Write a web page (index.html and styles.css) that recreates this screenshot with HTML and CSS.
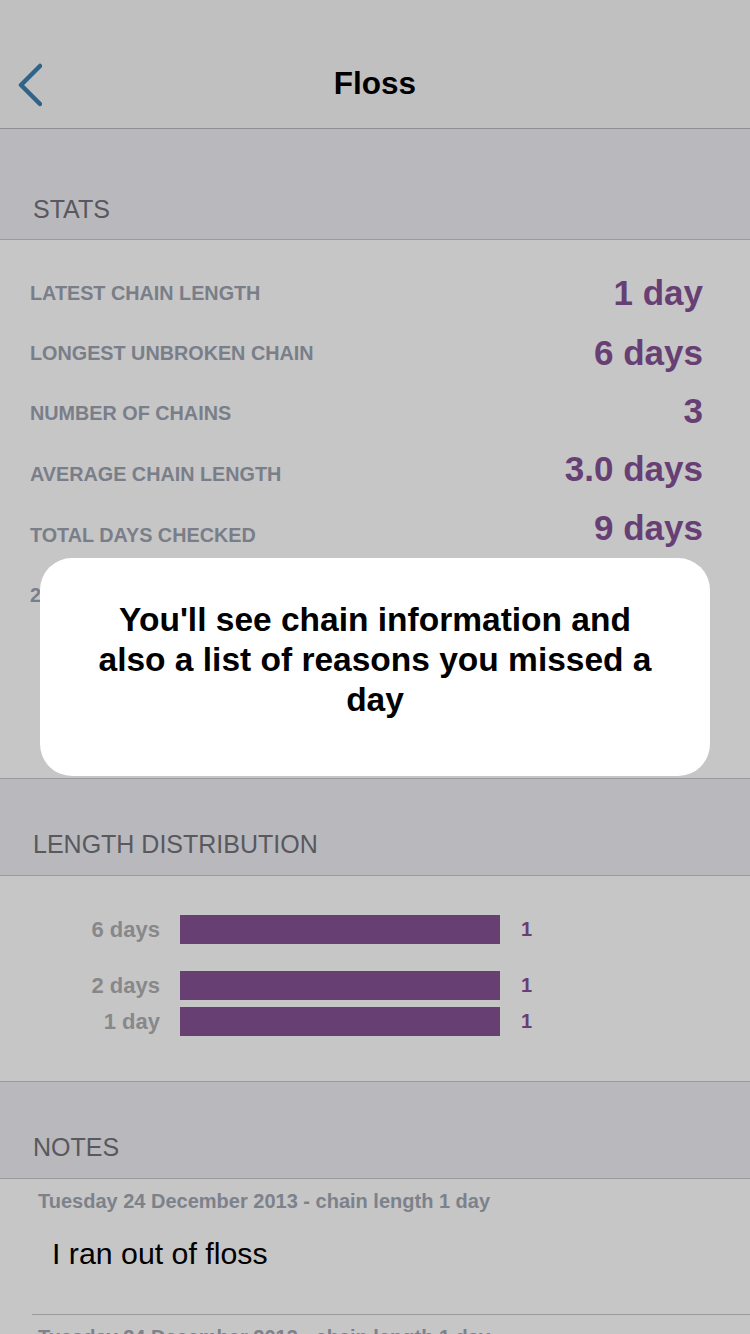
FILE: index.html
```html
<!DOCTYPE html>
<html>
<head>
<meta charset="utf-8">
<link rel="stylesheet" href="styles.css">
</head>
<body>
<div class="screen">
  <header class="nav">
    <svg class="back" width="40" height="50" viewBox="0 0 40 50"><polyline points="38,8 19,27 38,46" fill="none" stroke="#2f6387" stroke-width="4.5" stroke-linecap="round" stroke-linejoin="round"/></svg>
    <h1 class="title">Floss</h1>
  </header>

  <section class="group">
    <div class="group-head"><span>STATS</span></div>
    <div class="stats">
      <div class="stat"><span class="label">LATEST CHAIN LENGTH</span><span class="value">1 day</span></div>
      <div class="stat"><span class="label">LONGEST UNBROKEN CHAIN</span><span class="value">6 days</span></div>
      <div class="stat"><span class="label">NUMBER OF CHAINS</span><span class="value up1">3</span></div>
      <div class="stat"><span class="label">AVERAGE CHAIN LENGTH</span><span class="value up2">3.0 days</span></div>
      <div class="stat"><span class="label">TOTAL DAYS CHECKED</span><span class="value up3">9 days</span></div>
      <div class="stat"><span class="label">2013 DAYS CHECKED</span><span class="value">9 days</span></div>
    </div>
  </section>

  <section class="group">
    <div class="group-head short"><span>LENGTH DISTRIBUTION</span></div>
    <div class="dist">
      <div class="bar-row"><span class="bar-label">6 days</span><span class="bar" style="width:320px"></span><span class="bar-count">1</span></div>
      <div class="bar-row gap"><span class="bar-label">2 days</span><span class="bar" style="width:320px"></span><span class="bar-count">1</span></div>
      <div class="bar-row tight"><span class="bar-label">1 day</span><span class="bar" style="width:320px"></span><span class="bar-count">1</span></div>
    </div>
  </section>

  <section class="group">
    <div class="group-head short"><span>NOTES</span></div>
    <div class="notes">
      <div class="note">
        <div class="note-date">Tuesday 24 December 2013 - chain length 1 day</div>
        <div class="note-text">I ran out of floss</div>
      </div>
      <div class="note">
        <div class="note-date">Tuesday 24 December 2013 - chain length 1 day</div>
        <div class="note-text">I ran out of floss</div>
      </div>
    </div>
  </section>

  <div class="tip">
    <p>You'll see chain information and also a list of reasons you missed a day</p>
  </div>
</div>
</body>
</html>
```
FILE: styles.css
```css
html, body {
  margin: 0;
  padding: 0;
}
body {
  width: 750px;
  height: 1334px;
  overflow: hidden;
  background: #c6c6c6;
  font-family: "Liberation Sans", Arial, sans-serif;
}
.screen {
  position: relative;
  width: 750px;
  height: 1334px;
  overflow: hidden;
  background: #c6c6c6;
}
.nav {
  height: 129px;
  box-sizing: border-box;
  background: #c0c0c0;
  border-bottom: 1px solid #8f8f93;
  display: flex;
  align-items: center;
  justify-content: center;
  position: relative;
  padding-top: 40px;
}
.back {
  position: absolute;
  left: 2px;
  top: 58px;
}
.title {
  margin: 0;
  font-size: 31.5px;
  font-weight: bold;
  color: #000;
  line-height: 1;
}
.group-head {
  height: 111px;
  box-sizing: border-box;
  background: #b9b9bd;
  border-bottom: 1px solid #9a9a9e;
  display: flex;
  align-items: flex-end;
  padding: 0 0 15px 33px;
  font-size: 25px;
  color: #58585d;
}
.group-head.short {
  height: 97px;
  padding-bottom: 16px;
}
.stats {
  padding: 23px 47px 153px 30px;
  border-bottom: 1px solid #9a9a9e;
}
.stat {
  height: 60px;
  display: flex;
  align-items: center;
  justify-content: space-between;
}
.stat:nth-child(4) { height: 62px; }
.label {
  font-size: 19.8px;
  font-weight: bold;
  color: #797e89;
}
.value {
  font-size: 35px;
  font-weight: bold;
  color: #673f74;
}
.value.up1 { margin-top: -4px; }
.value.up2 { margin-top: -10px; }
.value.up3 { margin-top: -14px; }
.dist {
  padding: 39px 0 45px 0;
  border-bottom: 1px solid #9a9a9e;
}
.bar-row {
  display: flex;
  align-items: center;
  height: 29px;
}
.bar-row.gap { margin-top: 27px; }
.bar-row.tight { margin-top: 7px; }
.bar-label {
  width: 160px;
  text-align: right;
  font-size: 22px;
  font-weight: bold;
  color: #88888b;
  margin-right: 20px;
}
.bar {
  display: block;
  height: 29px;
  background: #673f72;
}
.bar-count {
  margin-left: 21px;
  font-size: 20px;
  font-weight: bold;
  color: #673f74;
}
.note {
  margin-left: 32px;
  border-bottom: 1px solid #9a9a9e;
  height: 136px;
  padding-top: 11px;
  box-sizing: border-box;
}
.note-date {
  margin-left: 6px;
  font-size: 20px;
  font-weight: bold;
  color: #7d818b;
}
.note-text {
  margin: 24px 0 0 20px;
  font-size: 30.3px;
  color: #000;
}
.tip {
  position: absolute;
  left: 40px;
  top: 558px;
  width: 670px;
  height: 218px;
  background: #fff;
  border-radius: 32px;
  display: flex;
  justify-content: center;
  padding: 42px 47px 0;
  box-sizing: border-box;
}
.tip p {
  margin: 0;
  text-align: center;
  font-size: 33.5px;
  font-weight: bold;
  line-height: 40px;
  color: #000;
}
```
